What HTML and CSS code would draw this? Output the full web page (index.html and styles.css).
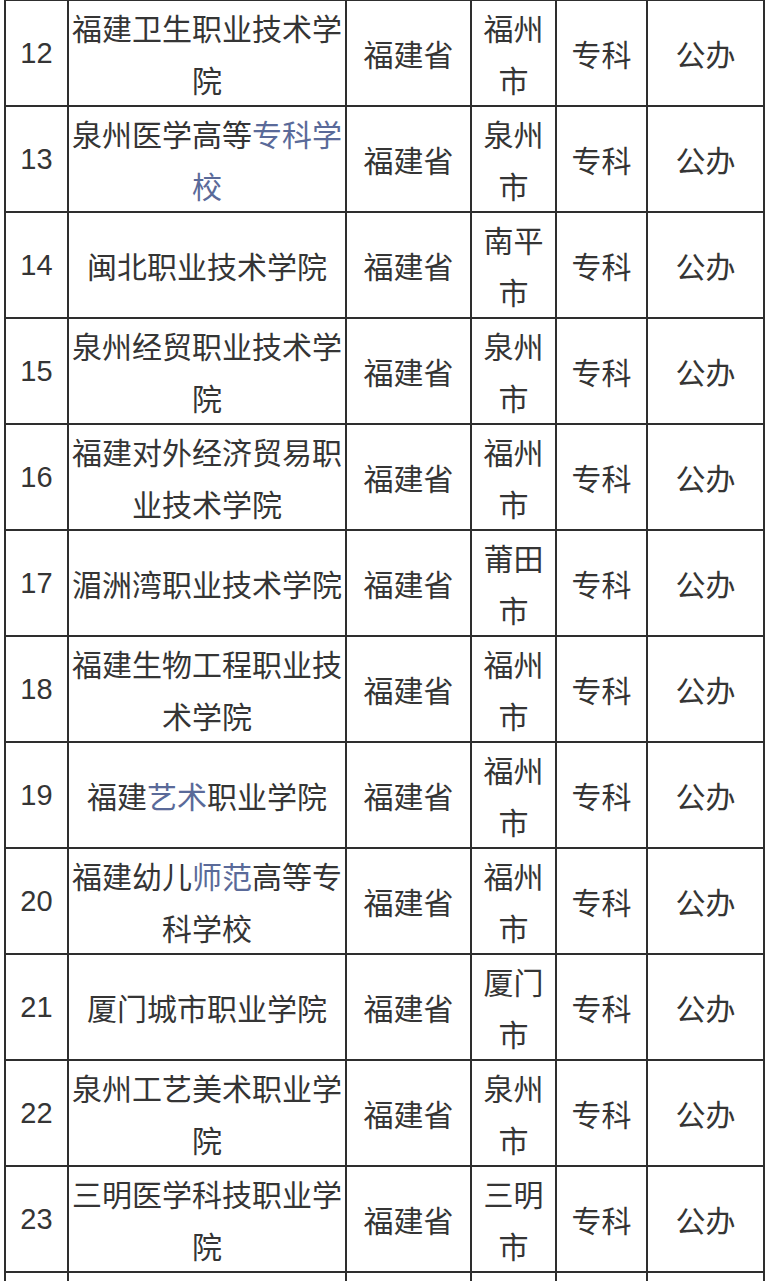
FILE: index.html
```html
<!DOCTYPE html>
<html lang="zh-CN">
<head>
<meta charset="utf-8">
<title>福建高校名单</title>
<link rel="stylesheet" href="styles.css">
</head>
<body>
<table class="schools">
  <colgroup>
    <col class="c-no"><col class="c-name"><col class="c-prov"><col class="c-city"><col class="c-level"><col class="c-type">
  </colgroup>
  <tbody>
    <tr><td class="no">12</td><td>福建卫生职业技术学院</td><td>福建省</td><td>福州市</td><td>专科</td><td>公办</td></tr>
    <tr><td class="no">13</td><td>泉州医学高等<span class="link">专科学校</span></td><td>福建省</td><td>泉州市</td><td>专科</td><td>公办</td></tr>
    <tr><td class="no">14</td><td>闽北职业技术学院</td><td>福建省</td><td>南平市</td><td>专科</td><td>公办</td></tr>
    <tr><td class="no">15</td><td>泉州经贸职业技术学院</td><td>福建省</td><td>泉州市</td><td>专科</td><td>公办</td></tr>
    <tr><td class="no">16</td><td>福建对外经济贸易职业技术学院</td><td>福建省</td><td>福州市</td><td>专科</td><td>公办</td></tr>
    <tr><td class="no">17</td><td>湄洲湾职业技术学院</td><td>福建省</td><td>莆田市</td><td>专科</td><td>公办</td></tr>
    <tr><td class="no">18</td><td>福建生物工程职业技术学院</td><td>福建省</td><td>福州市</td><td>专科</td><td>公办</td></tr>
    <tr><td class="no">19</td><td>福建<span class="link">艺术</span>职业学院</td><td>福建省</td><td>福州市</td><td>专科</td><td>公办</td></tr>
    <tr><td class="no">20</td><td>福建幼儿<span class="link">师范</span>高等专科学校</td><td>福建省</td><td>福州市</td><td>专科</td><td>公办</td></tr>
    <tr><td class="no">21</td><td>厦门城市职业学院</td><td>福建省</td><td>厦门市</td><td>专科</td><td>公办</td></tr>
    <tr><td class="no">22</td><td>泉州工艺美术职业学院</td><td>福建省</td><td>泉州市</td><td>专科</td><td>公办</td></tr>
    <tr><td class="no">23</td><td>三明医学科技职业学院</td><td>福建省</td><td>三明市</td><td>专科</td><td>公办</td></tr>
    <tr class="cut"><td></td><td></td><td></td><td></td><td></td><td></td></tr>
  </tbody>
</table>
</body>
</html>
```
FILE: styles.css
```css
html, body {
  margin: 0;
  padding: 0;
  background: #ffffff;
  overflow: hidden;
}

.schools {
  margin: -1px 0 0 4px;
  width: 761px;
  table-layout: fixed;
  border-collapse: collapse;
  font-family: "Noto Sans CJK SC", "Noto Sans", sans-serif;
  font-size: 30px;
  line-height: 52px;
  color: #353535;
}

.c-no { width: 63px; }
.c-name { width: 278px; }
.c-prov { width: 125px; }
.c-city { width: 85px; }
.c-level { width: 91px; }
.c-type { width: 117px; }

.schools td {
  border: 2px solid #2e2e2e;
  padding: 0;
  height: 104px;
  text-align: center;
  vertical-align: middle;
  word-break: break-all;
}

.schools td.no {
  font-family: "Liberation Sans", Arial, sans-serif;
  font-size: 29px;
}

.link {
  color: #5a6a99;
}
```
